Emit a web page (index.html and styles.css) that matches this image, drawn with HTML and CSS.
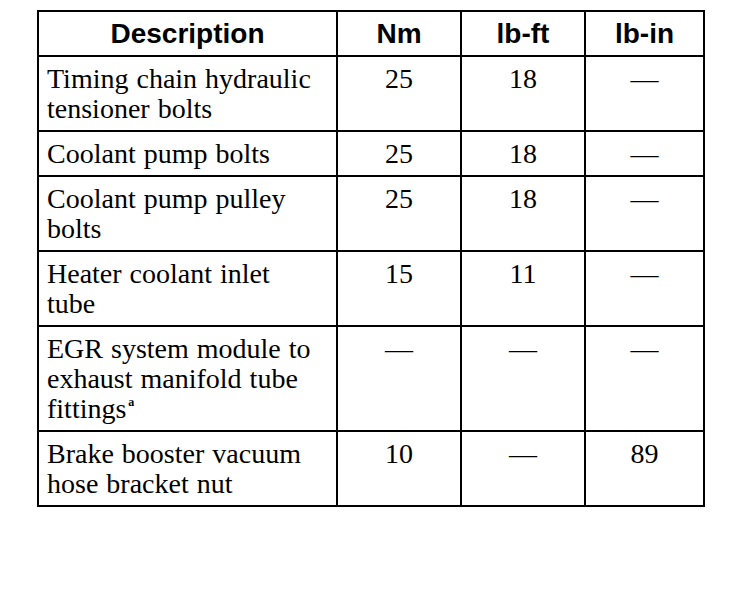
FILE: index.html
```html
<!DOCTYPE html>
<html>
<head>
<meta charset="utf-8">
<link rel="stylesheet" href="styles.css">
</head>
<body>
<table class="spec">
  <colgroup>
    <col class="c-desc">
    <col class="c-num">
    <col class="c-num">
    <col class="c-last">
  </colgroup>
  <thead>
    <tr>
      <th>Description</th>
      <th>Nm</th>
      <th>lb-ft</th>
      <th>lb-in</th>
    </tr>
  </thead>
  <tbody>
    <tr>
      <td class="desc">Timing chain hydraulic tensioner bolts</td>
      <td>25</td>
      <td>18</td>
      <td>—</td>
    </tr>
    <tr>
      <td class="desc">Coolant pump bolts</td>
      <td>25</td>
      <td>18</td>
      <td>—</td>
    </tr>
    <tr>
      <td class="desc">Coolant pump pulley bolts</td>
      <td>25</td>
      <td>18</td>
      <td>—</td>
    </tr>
    <tr>
      <td class="desc">Heater coolant inlet tube</td>
      <td>15</td>
      <td>11</td>
      <td>—</td>
    </tr>
    <tr>
      <td class="desc">EGR system module to exhaust manifold tube fittings<sup class="note">a</sup></td>
      <td>—</td>
      <td>—</td>
      <td>—</td>
    </tr>
    <tr>
      <td class="desc">Brake booster vacuum hose bracket nut</td>
      <td>10</td>
      <td>—</td>
      <td>89</td>
    </tr>
  </tbody>
</table>
</body>
</html>
```
FILE: styles.css
```css
html, body {
  margin: 0;
  background: #fff;
}
body {
  padding: 10px 0 0 37px;
}
.spec {
  border-collapse: collapse;
  table-layout: fixed;
  width: 666px;
  color: #000;
}
.c-desc { width: 299px; }
.c-num { width: 124px; }
.c-last { width: 119px; }
.spec th,
.spec td {
  border: 2px solid #000;
  padding: 7px 8px 6px 8px;
  line-height: 30px;
  vertical-align: top;
  text-align: center;
}
.spec th {
  font-family: "Liberation Sans", Arial, sans-serif;
  font-weight: bold;
  font-size: 28px;
}
.spec td {
  font-family: "Liberation Serif", "Times New Roman", serif;
  font-size: 28px;
  word-spacing: 1px;
}
.spec td.desc {
  text-align: left;
  padding-left: 8px;
  padding-right: 20px;
}
.note {
  display: inline-block;
  font-size: 12px;
  font-weight: bold;
  line-height: 12px;
  vertical-align: 12px;
  margin-left: 2px;
}
```
